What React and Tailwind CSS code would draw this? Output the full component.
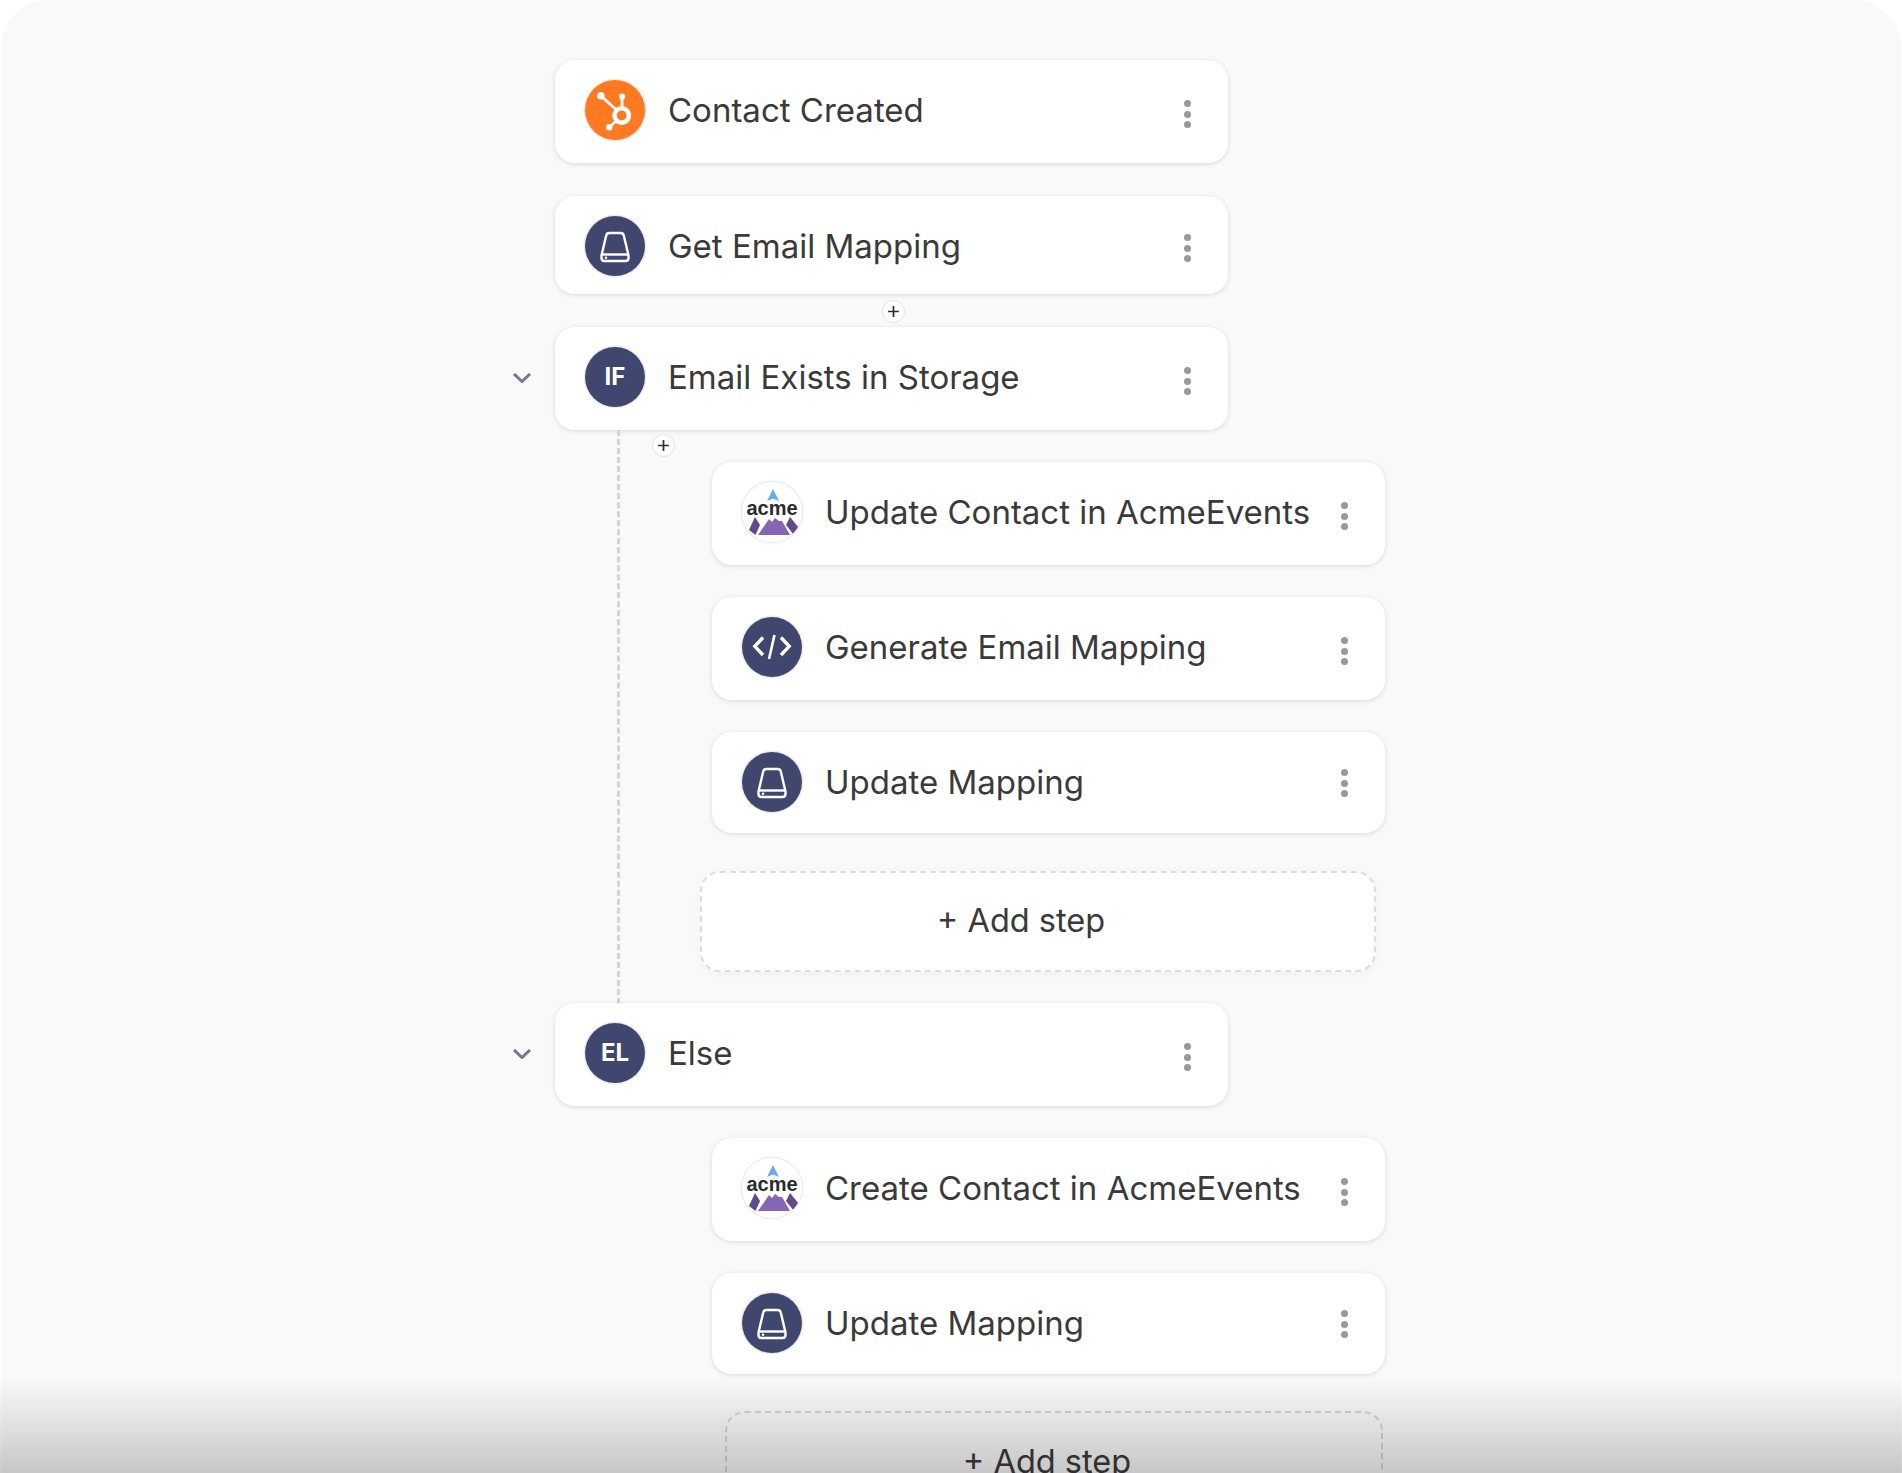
import React from 'react';

// hubspot sprocket
const HubspotIcon = () => (
  <svg viewBox="0 0 60 60" className="w-full h-full">
    <circle cx="30" cy="30" r="30" fill="#ff7a21" />
    <g fill="none" stroke="#fff" strokeWidth="2.8" strokeLinecap="round">
      <circle cx="36.7" cy="35.5" r="7.2" strokeWidth="4.6" />
      <path d="M16 16 L31 29.5" />
      <path d="M37 26 V17" />
      <path d="M31 41 L24.5 47" />
    </g>
    <circle cx="15.8" cy="15.8" r="3.8" fill="#fff" />
    <circle cx="37" cy="16.7" r="3.1" fill="#fff" />
    <circle cx="24.3" cy="47.3" r="3.2" fill="#fff" />
  </svg>
);

const StorageIcon = () => (
  <svg viewBox="0 0 60 60" className="w-full h-full">
    <circle cx="30" cy="30" r="30" fill="#40476f" />
    <g fill="none" stroke="#fff" strokeWidth="2.4" strokeLinejoin="round">
      <path d="M24.5 17 H35.5 Q38.3 17 38.8 19.5 L43.5 39.5 V42 Q43.5 45 40.5 45 H19.5 Q16.5 45 16.5 42 V39.5 L21.2 19.5 Q21.7 17 24.5 17 Z" />
      <path d="M17 38.5 H43" />
    </g>
    <circle cx="21" cy="41.8" r="1.3" fill="#fff" />
  </svg>
);

const CodeIcon = () => (
  <svg viewBox="0 0 60 60" className="w-full h-full">
    <circle cx="30" cy="30" r="30" fill="#40476f" />
    <g fill="none" stroke="#fff" strokeWidth="3.4">
      <path d="M21 20.5 L12.8 29.3 L21 38" />
      <path d="M39 20.5 L47.2 29.3 L39 38" />
      <path d="M32.5 18 L27 42" strokeWidth="2.6" />
    </g>
  </svg>
);

const AcmeIcon = () => (
  <div className="relative w-full h-full rounded-full bg-white overflow-hidden">
    <svg viewBox="0 0 60 60" className="absolute inset-0 w-full h-full">
      <path d="M31 7 L37 19 L31 16.5 L25 19 Z" fill="#62aee8" />
      <path d="M13 35 L18 43 L13.5 53 L7 48 Z" fill="#5f4b8b" />
      <path d="M48 35 L57 46 L52 53 L44 43 Z" fill="#5f4b8b" />
      <path d="M16 53 L27 37 L30 40 L33 36 L37 39 L40 39 L48 53 Z" fill="#8566b5" />
    </svg>
    <span className="absolute inset-x-0 top-[14px] text-center font-['Liberation_Sans',sans-serif] font-bold text-[20px] leading-[24px] text-[#2b2b2b]">
      acme
    </span>
  </div>
);

const BadgeIcon = ({ label }) => (
  <div className="w-full h-full rounded-full bg-[#40476f] flex items-center justify-center text-white font-bold text-[24px]">
    {label}
  </div>
);

const Kebab = ({ offset = 'mt-[20px]' }) => (
  <div className={`flex flex-col gap-[3.5px] ${offset}`}>
    <span className="w-[7px] h-[7px] rounded-full bg-[#999999]" />
    <span className="w-[7px] h-[7px] rounded-full bg-[#999999]" />
    <span className="w-[7px] h-[7px] rounded-full bg-[#999999]" />
  </div>
);

const Chevron = () => (
  <svg viewBox="0 0 18 10" className="absolute left-[-42px] top-[46px] w-[18px] h-[10px]" fill="none" stroke="#78738f" strokeWidth="3">
    <path d="M1 1 L9 8.5 L17 1" />
  </svg>
);

const PlusButton = ({ className }) => (
  <div className={`absolute w-[23px] h-[23px] rounded-full bg-white border border-[#e2e2e2] flex items-center justify-center ${className}`}>
    <svg viewBox="0 0 12 12" className="w-[13px] h-[13px]" stroke="#2e2e2e" strokeWidth="1.6">
      <path d="M6 1 V11 M1 6 H11" />
    </svg>
  </div>
);

const StepCard = ({ icon, title, className = '', height = 'h-[103px]', kebab, children }) => (
  <div className={`relative w-[673px] ${height} shrink-0 bg-white rounded-[20px] shadow-[0_1px_5px_rgba(0,0,0,0.13)] flex items-start pt-[20px] pl-[30px] pr-[37px] ${className}`}>
    <div className="w-[60px] h-[60px] rounded-full ring-[1.5px] ring-[#ececec] shrink-0">{icon}</div>
    <span className="ml-[23px] mt-[10px] flex-1 text-[33px] leading-[40px] text-[#3a3a3a] whitespace-nowrap">{title}</span>
    <Kebab offset={kebab} />
    {children}
  </div>
);

export default function App() {
  return (
    <div className="relative w-full h-[1473px] overflow-hidden bg-white font-['Inter',sans-serif]">
      <div className="mx-px h-full rounded-t-[48px] bg-[#f9f9f9] pt-[60px] pl-[554px] flex flex-col">
        <StepCard icon={<HubspotIcon />} title="Contact Created" />
        <StepCard icon={<StorageIcon />} title="Get Email Mapping" height="h-[98px]" className="mt-[33px]" kebab="mt-[18px]">
          <PlusButton className="left-[327px] top-[104px]" />
        </StepCard>
        <StepCard icon={<BadgeIcon label="IF" />} title="Email Exists in Storage" className="mt-[33px]">
          <Chevron />
          <PlusButton className="left-[97px] top-[107px]" />
          <div className="absolute left-[62px] top-[103px] h-[574px] border-l-[3px] border-dashed border-[#d4d4d4]" />
        </StepCard>

        <div className="ml-[157px] flex flex-col">
          <StepCard icon={<AcmeIcon />} title="Update Contact in AcmeEvents" className="mt-[32px]" />
          <StepCard icon={<CodeIcon />} title="Generate Email Mapping" className="mt-[32px]" />
          <StepCard icon={<StorageIcon />} title="Update Mapping" height="h-[101px]" className="mt-[32px]" kebab="mt-[17px]" />
          <div className="mt-[38px] -ml-[12px] w-[676px] h-[101px] rounded-[20px] bg-white border-2 border-dashed border-[#dddddd] shadow-[0_2px_8px_rgba(0,0,0,0.04)] flex items-center justify-center pr-[34px] text-[32.5px] text-[#3a3a3a]">
            + Add step
          </div>
        </div>

        <StepCard icon={<BadgeIcon label="EL" />} title="Else" className="mt-[31px]">
          <Chevron />
        </StepCard>

        <div className="ml-[157px] flex flex-col">
          <StepCard icon={<AcmeIcon />} title="Create Contact in AcmeEvents" className="mt-[32px]" />
          <StepCard icon={<StorageIcon />} title="Update Mapping" height="h-[101px]" className="mt-[32px]" kebab="mt-[17px]" />
          <div className="mt-[37px] ml-[13px] w-[658px] h-[103px] shrink-0 rounded-[20px] border-2 border-dashed border-[#d5d5d5] flex items-center justify-center pr-[14px] text-[32.5px] text-[#3a3a3a]">
            + Add step
          </div>
        </div>
      </div>
      {/* fade over the bottom of the page */}
      <div className="absolute inset-x-0 bottom-0 h-[96px] bg-gradient-to-b from-transparent to-[rgba(0,0,0,0.2)]" />
    </div>
  );
}
